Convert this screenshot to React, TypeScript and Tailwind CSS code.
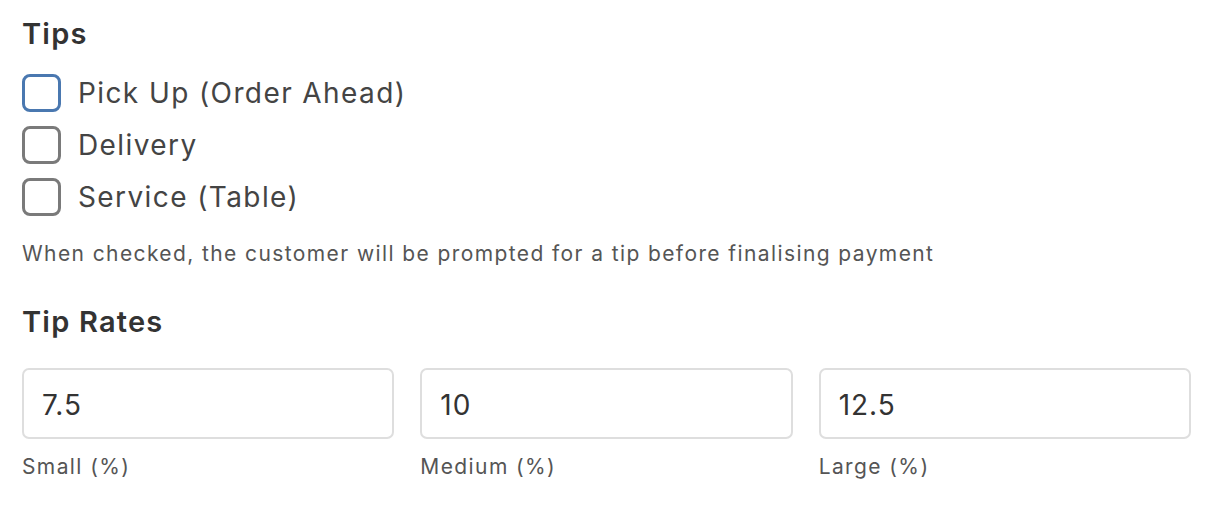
import React from 'react';

const options = [
  { label: 'Pick Up (Order Ahead)', focused: true },
  { label: 'Delivery', focused: false },
  { label: 'Service (Table)', focused: false },
];

const rates = [
  { value: '7.5', label: 'Small (%)' },
  { value: '10', label: 'Medium (%)' },
  { value: '12.5', label: 'Large (%)' },
];

const App: React.FC = () => {
  return (
    <div
      className="min-h-screen bg-white px-[22px] pt-[14px] text-[#333]"
      style={{ fontFamily: 'Inter, "Noto Sans", sans-serif' }}
    >
      {/* Tips */}
      <h2 className="text-[29px] font-semibold leading-[40px] tracking-[1.2px] text-[#333]">Tips</h2>
      <div className="mt-[20px] flex flex-col gap-[14px]">
        {options.map((o) => (
          <label key={o.label} className="flex h-[38px] items-center">
            <span
              className={`h-[38px] w-[39px] shrink-0 rounded-[8px] border-[3px] bg-white ${
                o.focused ? 'border-[#4a78b0]' : 'border-[#7a7a7a]'
              }`}
            />
            <span className="ml-[17px] text-[28px] tracking-[1.4px] text-[#444]">{o.label}</span>
          </label>
        ))}
      </div>
      <p className="mt-[24px] text-[21px] leading-[28px] tracking-[1.4px] text-[#555]">
        When checked, the customer will be prompted for a tip before finalising payment
      </p>

      {/* Tip Rates */}
      <h2 className="mt-[34px] text-[29px] font-semibold leading-[40px] tracking-[1.2px] text-[#333]">Tip Rates</h2>
      <div className="mt-[26px] flex w-[1169px] gap-[26px]">
        {rates.map((r) => (
          <div key={r.label} className="flex-1">
            <div className="flex h-[71px] items-center rounded-[7px] border-2 border-[#dedede] px-[18px] pt-[3px] text-[28px] tracking-[1px] text-[#333]">
              {r.value}
            </div>
            <div className="mt-[14px] text-[21px] leading-[28px] tracking-[1.4px] text-[#555]">{r.label}</div>
          </div>
        ))}
      </div>
    </div>
  );
};

export default App;
